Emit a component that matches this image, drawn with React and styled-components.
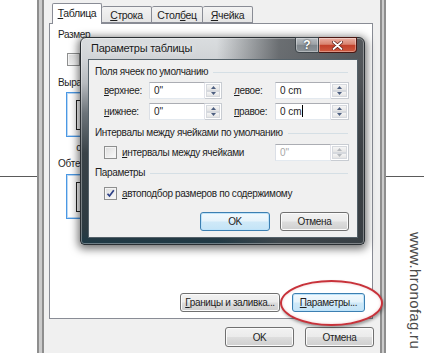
import React from 'react';
import styled, { createGlobalStyle } from 'styled-components';

const GlobalStyle = createGlobalStyle`
  html, body { margin: 0; padding: 0; background: #fff; }
  body { font-family: "Liberation Sans", Arial, sans-serif; font-size: 10px; letter-spacing: -0.35px; color: #1e1e1e; }
  * { box-sizing: border-box; }
`;

const Page = styled.div`
  width: 424px; height: 353px; overflow: hidden; display: flex; background: #fff; position: relative;
`;

const Gutter = styled.div`
  width: ${p => p.$w}px; flex: none; display: flex; flex-direction: column;
`;

const Rule = styled.div`
  margin-top: 176px; height: 1px; background: #5a5a5a;
`;

const Watermark = styled.div`
  writing-mode: vertical-rl;
  margin: 55px 0 0 16px;
  font-family: "Liberation Sans", sans-serif;
  font-size: 15px;
  color: #4a4a4a;
  letter-spacing: 0.3px;
`;

const Window = styled.div`
  width: 349px; flex: none; display: flex; height: 100%;
`;

const FrameSide = styled.div`
  width: ${p => p.$w}px; flex: none;
  background: linear-gradient(to right, #8e8e8e 0 2px, #cbcbcb 2px ${p => p.$w - 2}px, #8e8e8e ${p => p.$w - 2}px);
`;

const Body = styled.div`
  flex: 1; background: #f0f0f0; display: flex; flex-direction: column;
  padding: 3px 7px 0 5px;
`;

const TabStrip = styled.div`
  display: flex; align-items: flex-end; height: 20px; padding-left: 3px; position: relative; z-index: 1;
`;

const Tab = styled.div`
  width: ${p => p.$w}px; height: ${p => (p.$active ? 21 : 17)}px;
  margin-bottom: ${p => (p.$active ? -1 : 0)}px;
  border: 1px solid #898c95; border-bottom: ${p => (p.$active ? 'none' : '1px solid #898c95')};
  border-left: ${p => (p.$first || p.$active ? '1px solid #898c95' : 'none')};
  background: ${p => (p.$active ? '#fff' : 'linear-gradient(#f3f3f3, #e5e5e5)')};
  display: flex; align-items: center; justify-content: center;
  padding-bottom: ${p => (p.$active ? 2 : 0)}px;
  border-radius: 2px 2px 0 0;
  font-size: 10.5px;
`;

const Label = styled.span`
  white-space: nowrap;
  u { text-decoration: underline; text-underline-offset: 1px; }
`;

const Panel = styled.div`
  height: 296px; flex: none; background: #fff; border: 1px solid #898c95;
  display: flex; flex-direction: column; padding: 4px 7px 6px 8px;
`;

const SectionLabel = styled.div`
  line-height: 14px; height: 14px; margin-top: ${p => p.$mt || 0}px; white-space: nowrap;
`;

const CheckLine = styled.div`
  display: flex; align-items: center; gap: 5px; height: 17px;
  margin-top: ${p => p.$mt || 0}px; margin-left: ${p => p.$ml || 0}px; white-space: nowrap;
`;

const Box = styled.div`
  width: 13px; height: 13px; flex: none;
  border: 1px solid #8e8f8f;
  background: linear-gradient(135deg, #dcdcdc, #fbfbfb);
  box-shadow: inset 0 0 0 1px #f4f4f4;
  display: flex; align-items: center; justify-content: center;
`;

const OptionRow = styled.div`
  display: flex; gap: 10px; margin-top: ${p => p.$mt}px; margin-left: 8px;
`;

const Option = styled.div`
  display: flex; flex-direction: column; align-items: center; width: 46px;
`;

const OptionTile = styled.div`
  width: 46px; height: 45px; border: 1px solid #4a98e4;
  box-shadow: inset 0 0 0 1px #bcd8f4; background: #fff;
  display: flex; align-items: center; padding-left: 9px;
`;

const OptionCaption = styled.div`
  line-height: 14px; height: 14px; margin-top: 4px; white-space: nowrap;
`;

const Spacer = styled.div` flex: 1; `;

const ButtonRow = styled.div`
  display: flex; justify-content: flex-end; gap: ${p => p.$gap}px;
  margin-top: ${p => p.$mt || 0}px; margin-right: ${p => p.$mr || 0}px;
`;

const Button = styled.div`
  width: ${p => p.$w}px; height: ${p => p.$h || 19}px; flex: none;
  border: 1px solid ${p => (p.$focus ? '#3c7fb1' : '#707070')};
  border-radius: 3px;
  background: ${p => (p.$focus
    ? 'linear-gradient(#f2f9fd 0%, #e5f3fb 48%, #cfe9f8 52%, #c4e4f7 100%)'
    : 'linear-gradient(#f2f2f2 0%, #ebebeb 48%, #dddddd 52%, #cfcfcf 100%)')};
  box-shadow: inset 0 0 0 1px ${p => (p.$focus ? '#bde3fa' : '#fbfbfb')};
  display: flex; align-items: center; justify-content: center; white-space: nowrap;
`;

const Ringed = styled.div`
  position: relative; z-index: 0;
  &::before {
    content: ''; position: absolute; z-index: -1;
    left: -12px; top: -13px; width: 99px; height: 42px;
    border-radius: 50%;
    border: 2px solid #c8323a;
    background: #ffffff;
    box-shadow: 1px 2px 3px rgba(0, 0, 0, 0.35), inset 0 0 3px rgba(200, 50, 58, 0.25);
  }
`;

/* ---------- modal ---------- */

const Modal = styled.div`
  position: absolute; left: 80px; top: 37px; width: 285px; height: 208px;
  border: 1px solid #2a2f33; border-radius: 6px 6px 4px 4px;
  background:
    linear-gradient(to right, rgba(70, 74, 78, 0) 0%, rgba(70, 74, 78, 0) 48%, rgba(70, 74, 78, 0.75) 70%, rgba(60, 64, 68, 0.85) 100%),
    linear-gradient(to bottom, #dadddf 0px, #d0d3d6 22px, #b7bbbf 45px, #6c747a 75px, #3a4348 115px, #2d3a41 190px, #1f3a46 100%);
  box-shadow: inset 0 0 0 1px rgba(255, 255, 255, 0.35), 0 2px 9px 2px rgba(0, 0, 0, 0.55);
  display: flex; flex-direction: column; padding: 0 6px 6px 7px;
`;

const TitleBar = styled.div`
  height: 21px; flex: none; display: flex; align-items: flex-start;
`;

const TitleText = styled.div`
  font-size: 11px; letter-spacing: -0.25px; line-height: 21px; padding-left: 3px; color: #1b1b1b; white-space: nowrap;
  text-shadow: 0 0 6px rgba(255, 255, 255, 0.9);
`;

const Caption = styled.div`
  margin-left: auto; margin-top: -1px; margin-right: 1px; display: flex; height: 16px;
`;

const CapBtn = styled.div`
  width: ${p => p.$w}px; height: 16px;
  border: 1px solid ${p => (p.$close ? '#4a1712' : '#3d4449')};
  border-left: ${p => (p.$close ? 'none' : undefined)};
  border-radius: ${p => (p.$close ? '0 0 4px 0' : '0 0 0 4px')};
  background: ${p => (p.$close
    ? 'linear-gradient(#eab0a4 0%, #d98470 45%, #c2412b 52%, #cf5a3f 100%)'
    : 'linear-gradient(#b9bec2 0%, #9ca2a7 45%, #80878d 52%, #8c9398 100%)')};
  box-shadow: inset 0 0 0 1px rgba(255, 255, 255, 0.35);
  display: flex; align-items: center; justify-content: center;
  color: #fff; font-family: "Liberation Sans", sans-serif; font-weight: bold; font-size: 12px; letter-spacing: 0;
  text-shadow: 0 0 2px rgba(0, 0, 0, 0.8);
`;

const Client = styled.div`
  flex: 1; background: #f0f0f0; border: 1px solid #55626a;
  display: flex; flex-direction: column; padding: 5px 8px 0 6px;
`;

const GroupHead = styled.div`
  display: flex; align-items: center; height: 14px; line-height: 14px; white-space: nowrap;
  margin-top: ${p => p.$mt || 0}px;
  &::after { content: ''; flex: 1; height: 1px; background: #d5dfe5; margin-left: 5px; margin-right: 1px; }
`;

const FieldRow = styled.div`
  display: flex; align-items: center; height: 17px; padding-left: 9px;
  margin-top: ${p => p.$mt || 0}px;
`;

const FieldLabel = styled.div`
  width: ${p => p.$w}px; flex: none; white-space: nowrap;
  margin-left: ${p => p.$ml || 0}px;
  u { text-decoration: underline; text-underline-offset: 1px; }
`;

const Spin = styled.div`
  display: flex; height: 17px; flex: none; margin-left: ${p => p.$ml || 0};
`;

const Input = styled.div`
  width: 56px; height: 17px;
  border: 1px solid; border-color: #abadb3 #e2e3ea #e3e9ef #dbdfe6;
  background: #fff; padding-left: 4px; line-height: 15px; white-space: nowrap; letter-spacing: 0;
  color: ${p => (p.$disabled ? '#a8a8a8' : '#1e1e1e')};
`;

const Caret = styled.span`
  display: inline-block; width: 1px; height: 12px; background: #000; vertical-align: -2px;
`;

const Stepper = styled.div`
  width: ${p => p.$w || 18}px; height: 17px; display: flex; flex-direction: column;
  border: 1px solid #c8ccd2; border-left: none; background: #fff; padding: 1px;
`;

const Step = styled.div`
  flex: 1; display: flex; align-items: center; justify-content: center;
  background: linear-gradient(#f6f6f6, #e4e4e4);
  border: 1px solid #d6d9de;
`;

const Arrow = ({ down, dim }) => (
  <svg width="5" height="3" viewBox="0 0 5 3">
    <path d={down ? 'M0 0 L5 0 L2.5 3 Z' : 'M0 3 L5 3 L2.5 0 Z'} fill={dim ? '#b4b8bd' : '#4d5f80'} />
  </svg>
);

const SpinField = ({ value, caret, disabled, ml, sw }) => (
  <Spin $ml={ml}>
    <Input $disabled={disabled}>{value}{caret && <Caret />}</Input>
    <Stepper $w={sw}>
      <Step><Arrow dim={disabled} /></Step>
      <Step><Arrow down dim={disabled} /></Step>
    </Stepper>
  </Spin>
);

const Tick = () => (
  <svg width="9" height="9" viewBox="0 0 9 9">
    <path d="M1.5 4.8 L3.5 7 L7.8 1.2" fill="none" stroke="#2c3f86" strokeWidth="1.7" />
  </svg>
);

const TableGlyph = () => (
  <svg width="26" height="30" viewBox="0 0 26 30">
    <rect x="0.5" y="0.5" width="13" height="29" fill="none" stroke="#222" />
    <line x1="4.5" y1="0" x2="4.5" y2="30" stroke="#222" />
    <line x1="9.5" y1="0" x2="9.5" y2="30" stroke="#222" />
    <line x1="16" y1="4" x2="26" y2="4" stroke="#9a9a9a" />
    <line x1="16" y1="9" x2="26" y2="9" stroke="#9a9a9a" />
    <line x1="16" y1="14" x2="26" y2="14" stroke="#9a9a9a" />
  </svg>
);

const CloseX = () => (
  <svg width="11" height="9" viewBox="0 0 11 9">
    <path d="M1.5 1 L9.5 8 M9.5 1 L1.5 8" stroke="#5a1a12" strokeWidth="3.2" strokeLinecap="round" />
    <path d="M1.5 1 L9.5 8 M9.5 1 L1.5 8" stroke="#fff" strokeWidth="1.8" strokeLinecap="round" />
  </svg>
);

export default function App() {
  return (
    <>
      <GlobalStyle />
      <Page>
        <Gutter $w={37}><Rule /></Gutter>
        <Window>
          <FrameSide $w={7} />
          <Body>
            <TabStrip>
              <Tab $w={50} $active $first><Label><u>Т</u>аблица</Label></Tab>
              <Tab $w={50}><Label><u>С</u>трока</Label></Tab>
              <Tab $w={51}><Label>Стол<u>б</u>ец</Label></Tab>
              <Tab $w={50}><Label><u>Я</u>чейка</Label></Tab>
            </TabStrip>
            <Panel>
              <SectionLabel>Размер</SectionLabel>
              <CheckLine $mt={9} $ml={9}><Box /></CheckLine>
              <SectionLabel $mt={8}>Выравнивание</SectionLabel>
              <OptionRow $mt={2}>
                <Option><OptionTile><TableGlyph /></OptionTile><OptionCaption>слева</OptionCaption></Option>
              </OptionRow>
              <SectionLabel $mt={2}>Обтекание</SectionLabel>
              <OptionRow $mt={3}>
                <Option><OptionTile><TableGlyph /></OptionTile></Option>
              </OptionRow>
              <Spacer />
              <ButtonRow $gap={12}>
                <Button $w={100}><Label><u>Г</u>раницы и заливка...</Label></Button>
                <Ringed><Button $w={73} $focus><Label><u>П</u>араметры...</Label></Button></Ringed>
              </ButtonRow>
            </Panel>
            <ButtonRow $gap={11} $mt={8} $mr={-1}>
              <Button $w={69} $h={20}>OK</Button>
              <Button $w={69} $h={20}>Отмена</Button>
            </ButtonRow>
          </Body>
          <FrameSide $w={6} />
        </Window>
        <Gutter $w={38}>
          <Rule />
          <Watermark>www.hronofag.ru</Watermark>
        </Gutter>

        <Modal>
          <TitleBar>
            <TitleText>Параметры таблицы</TitleText>
            <Caption>
              <CapBtn $w={24}>?</CapBtn>
              <CapBtn $w={38} $close><CloseX /></CapBtn>
            </Caption>
          </TitleBar>
          <Client>
            <GroupHead>Поля ячеек по умолчанию</GroupHead>
            <FieldRow $mt={3}>
              <FieldLabel $w={45}><u>в</u>ерхнее:</FieldLabel>
              <SpinField value={'0"'} sw={17} />
              <FieldLabel $w={41} $ml={12}><u>л</u>евое:</FieldLabel>
              <SpinField value="0 cm" />
            </FieldRow>
            <FieldRow $mt={4}>
              <FieldLabel $w={45}><u>н</u>ижнее:</FieldLabel>
              <SpinField value={'0"'} sw={17} />
              <FieldLabel $w={41} $ml={12}><u>п</u>равое:</FieldLabel>
              <SpinField value="0 cm" caret />
            </FieldRow>
            <GroupHead $mt={6}>Интервалы между ячейками по умолчанию</GroupHead>
            <FieldRow $mt={4}>
              <CheckLine><Box /><Label><u>и</u>нтервалы между ячейками</Label></CheckLine>
              <SpinField value={'0"'} disabled ml="auto" />
            </FieldRow>
            <GroupHead $mt={5}>Параметры</GroupHead>
            <FieldRow $mt={5}>
              <CheckLine><Box><Tick /></Box><Label><u>а</u>втоподбор размеров по содержимому</Label></CheckLine>
            </FieldRow>
            <ButtonRow $gap={10} $mt={10}>
              <Button $w={70} $focus>OK</Button>
              <Button $w={69}>Отмена</Button>
            </ButtonRow>
          </Client>
        </Modal>
      </Page>
    </>
  );
}
